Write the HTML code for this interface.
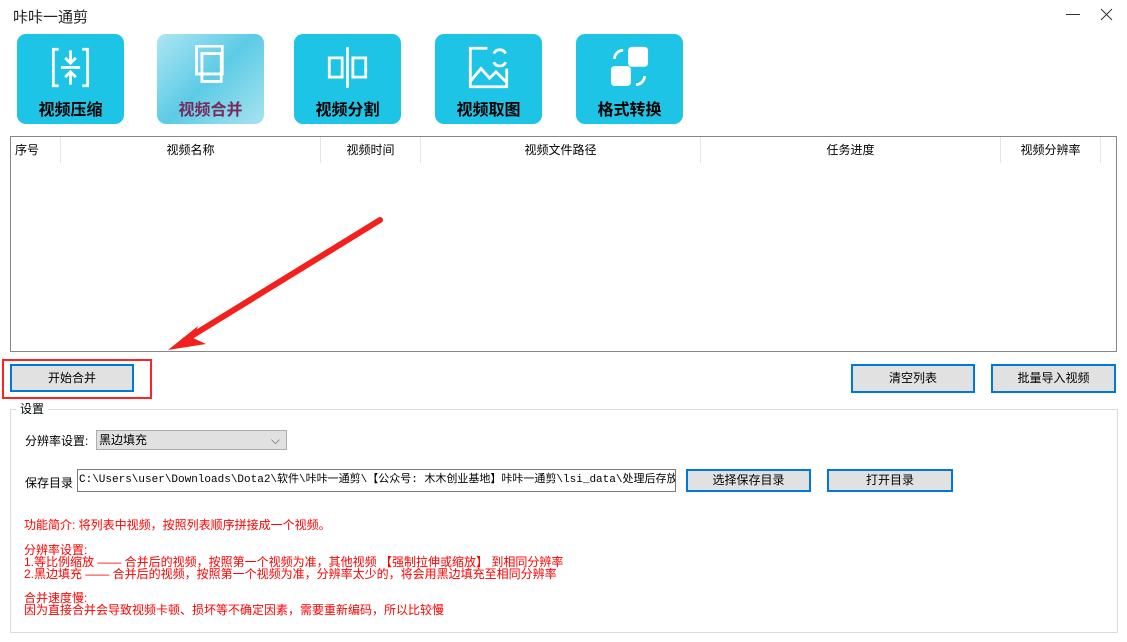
<!DOCTYPE html>
<html><head><meta charset="utf-8"><style>
*{margin:0;padding:0;box-sizing:border-box}
body{width:1127px;height:642px;background:#fff;position:relative;overflow:hidden;font-family:"Liberation Sans","Noto Sans CJK SC",sans-serif;font-size:12px;color:#000}
.a{position:absolute}
.tb{position:absolute;top:34px;width:107px;height:90px;border-radius:9px;background:#1ec4e5;text-align:center}
.tb span{position:absolute;left:0;right:0;top:62px;font-size:16px;font-weight:bold}
.tb svg{position:absolute;left:31px;top:11px}
.btn{position:absolute;background:#e1e1e1;border:2px solid #0078d7;text-align:center;line-height:24px;font-size:12px}
.btn2{position:absolute;background:#e1e1e1;border:1px solid #adadad;text-align:center;font-size:12px}
.hd{position:absolute;top:0;height:26px;line-height:26px;text-align:center;border-right:1px solid #e5e5e5;font-size:12px}
.r{position:absolute;color:#f00;font-size:12px;line-height:12px;left:24px;white-space:nowrap}
</style></head><body>
<div class="a" style="left:13px;top:6px;font-size:15px;color:#222">咔咔一通剪</div>
<svg class="a" style="left:1066px;top:8px" width="50" height="14" stroke="#333" stroke-width="1"><path d="M0 6.5h14M35 1l11 11M46 1L35 12"/></svg>

<div class="tb" style="left:17px"><svg width="45" height="45" viewBox="0 0 42 42" fill="none" stroke="#fff" stroke-width="2.6"><path d="M10 4H5v34h5M32 4h5v34h-5"/><path d="M12 21h18"/><path d="M21 5v11M16 12l5 5 5-5M21 37V26M16 30l5-5 5 5"/></svg><span>视频压缩</span></div>
<div class="tb" style="left:157px;background:linear-gradient(135deg,#aee6f2,#5ccbe6 50%,#a8e3ef)"><svg width="45" height="45" viewBox="0 0 42 42" fill="none" stroke="#fff" stroke-width="2.6"><path d="M8 1h24v26H8z"/><path d="M13 8h18v26H13z"/></svg><span style="color:#7a2a5a">视频合并</span></div>
<div class="tb" style="left:294px"><svg width="45" height="45" viewBox="0 0 42 42" fill="none" stroke="#fff" stroke-width="2.6"><path d="M21 2v38"/><path d="M4 12h12v18H4zM26 12h12v18H26z"/></svg><span>视频分割</span></div>
<div class="tb" style="left:435px"><svg width="45" height="45" viewBox="0 0 42 42" fill="none" stroke="#fff" stroke-width="2.6"><path d="M20 3H4v36h34V22"/><path d="M4 34l10-12 8 9 6-6 10 10"/><path d="M26 8a6 6 0 0 1 11 0M37 16a6 6 0 0 1-11 0"/></svg><span>视频取图</span></div>
<div class="tb" style="left:576px"><svg width="45" height="45" viewBox="0 0 42 42" fill="#fff" stroke="#fff" stroke-width="2.6"><rect x="21" y="3" width="16" height="16" rx="2"/><rect x="5" y="21" width="16" height="16" rx="2"/><path d="M15 5a8 8 0 0 0-8 8" fill="none"/><path d="M27 37a8 8 0 0 0 8-8" fill="none"/></svg><span>格式转换</span></div>

<div class="a" style="left:10px;top:136px;width:1107px;height:216px;border:1px solid #828790">
<div class="hd" style="left:0;width:50px;text-align:left;padding-left:4px">序号</div>
<div class="hd" style="left:50px;width:260px">视频名称</div>
<div class="hd" style="left:310px;width:100px">视频时间</div>
<div class="hd" style="left:410px;width:280px">视频文件路径</div>
<div class="hd" style="left:690px;width:300px">任务进度</div>
<div class="hd" style="left:990px;width:100px">视频分辨率</div>
</div>

<svg class="a" style="left:0;top:0" width="1127" height="642"><path d="M380 220L185 340" stroke="#f2211d" stroke-width="6" stroke-linecap="round"/><path d="M168 350l30-24-5 12 13 6z" fill="#f2211d"/></svg>

<div class="btn" style="left:10px;top:364px;width:124px;height:28px">开始合并</div>
<div class="a" style="left:2px;top:359px;width:150px;height:40px;border:2px solid #f22"></div>
<div class="btn" style="left:851px;top:364px;width:124px;height:29px">清空列表</div>
<div class="btn" style="left:991px;top:364px;width:125px;height:29px">批量导入视频</div>

<div class="a" style="left:10px;top:409px;width:1108px;height:224px;border:1px solid #dcdcdc"></div>
<div class="a" style="left:16px;top:402px;background:#fff;padding:0 4px;line-height:15px">设置</div>
<div class="a" style="left:25px;top:432px">分辨率设置:</div>
<div class="btn2" style="left:96px;top:430px;width:191px;height:20px;text-align:left;padding-left:2px;line-height:18px">黑边填充<span style="position:absolute;right:6px;top:0;color:#555">⌵</span></div>
<div class="a" style="left:25px;top:474px">保存目录</div>
<div class="a" style="left:77px;top:469px;width:599px;height:23px;border:1px solid #7a7a7a;font-family:'Liberation Mono','Noto Sans CJK SC',monospace;font-size:11px;line-height:21px;white-space:nowrap;overflow:hidden;padding-left:1px">C:\Users\user\Downloads\Dota2\软件\咔咔一通剪\【公众号: 木木创业基地】咔咔一通剪\lsi_data\处理后存放</div>
<div class="btn" style="left:686px;top:469px;width:125px;height:23px;line-height:19px">选择保存目录</div>
<div class="btn" style="left:827px;top:469px;width:126px;height:23px;line-height:19px">打开目录</div>

<div class="r" style="top:519px">功能简介: 将列表中视频，按照列表顺序拼接成一个视频。</div>
<div class="r" style="top:544px">分辨率设置:</div>
<div class="r" style="top:556px">1.等比例缩放 —— 合并后的视频，按照第一个视频为准，其他视频 【强制拉伸或缩放】 到相同分辨率</div>
<div class="r" style="top:568px">2.黑边填充 —— 合并后的视频，按照第一个视频为准，分辨率太少的，将会用黑边填充至相同分辨率</div>
<div class="r" style="top:592px">合并速度慢:</div>
<div class="r" style="top:604px">因为直接合并会导致视频卡顿、损坏等不确定因素，需要重新编码，所以比较慢</div>
</body></html>
